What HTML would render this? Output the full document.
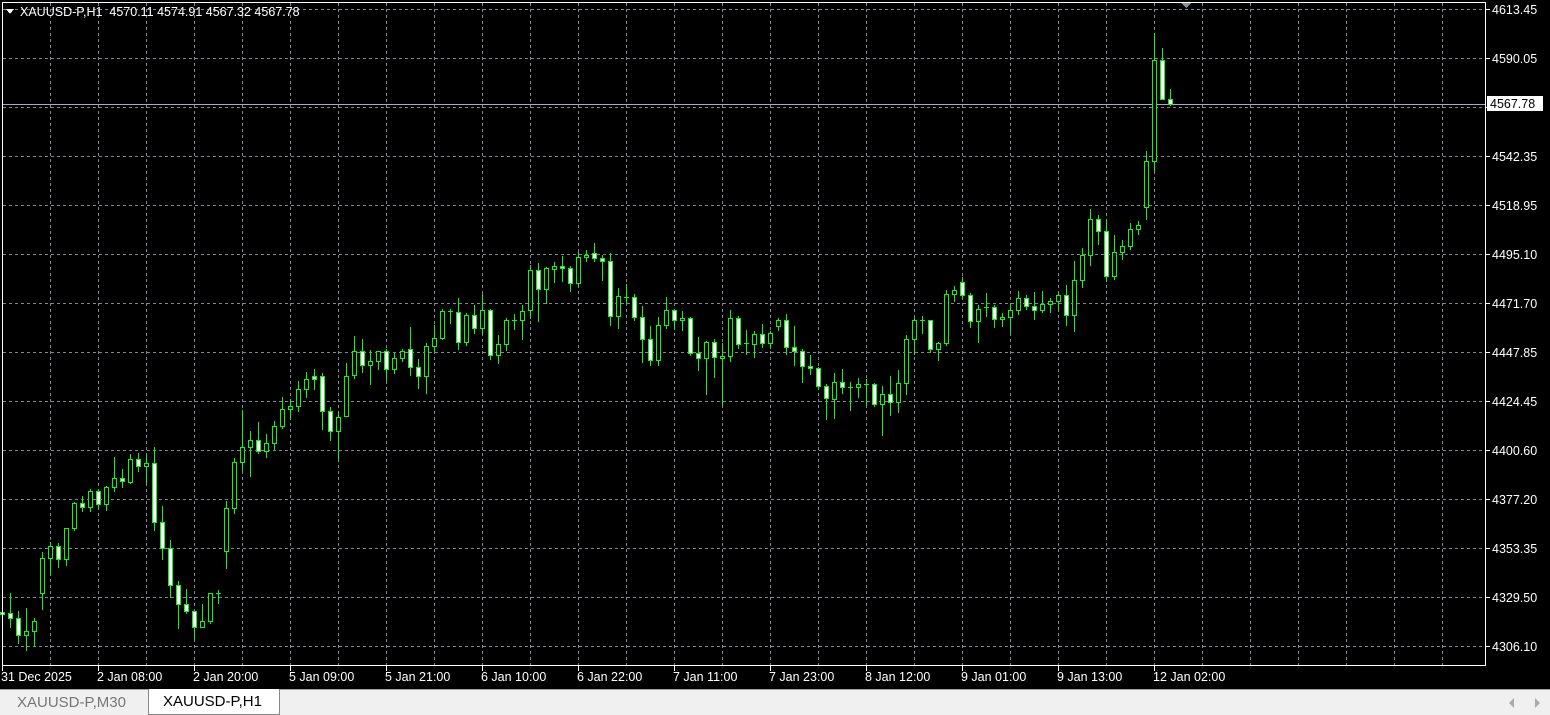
<!DOCTYPE html>
<html><head><meta charset="utf-8"><style>
html,body{margin:0;padding:0;width:1550px;height:715px;overflow:hidden;background:#000;font-family:"Liberation Sans",sans-serif}
svg{position:absolute;left:0;top:0}
#tabs{position:absolute;left:0;top:689px;width:1550px;height:26px;background:#f0f0f0;border-top:1px solid #a0a0a0;box-sizing:border-box}
.tab{position:absolute;top:0;height:25px;line-height:25px;font-size:15px;padding:0 14px}
</style></head><body>
<svg id="c" width="1550" height="689" xmlns="http://www.w3.org/2000/svg" shape-rendering="crispEdges"></svg>
<div id="tabs">
<div class="tab" style="left:3px;color:#777">XAUUSD-P,M30</div>
<div class="tab" style="left:148px;width:102px;background:#fff;border:1px solid #888;border-top:none;color:#000;top:-1px;height:25px">XAUUSD-P,H1</div>
<div style="position:absolute;left:1509px;top:8px;width:0;height:0;border-top:5px solid transparent;border-bottom:5px solid transparent;border-right:5px solid #aaa"></div>
<div style="position:absolute;left:1535px;top:8px;width:0;height:0;border-top:5px solid transparent;border-bottom:5px solid transparent;border-left:5px solid #aaa"></div>
</div>
<script>
var D=[[612,614,598,622,1],[613,618,593,627,1],[618,635,611,643,1],[631,635,608,650,0],[621,631,618,645,0],[558,593,552,609,0],[546,558,542,574,0],[546,559,543,567,1],[528,559,528,565,0],[503,528,502,530,0],[503,507,496,511,1],[491,507,489,511,0],[491,504,489,508,1],[487,504,486,510,0],[478,487,457,491,0],[478,481,469,487,1],[459,482,454,483,0],[459,466,453,471,1],[463,466,455,483,0],[463,522,447,530,1],[522,548,506,559,1],[548,585,540,597,1],[585,604,581,628,1],[604,611,589,613,1],[611,627,611,639,1],[621,627,604,627,0],[593,621,593,623,0],[593,593,590,603,0],[508,551,501,568,0],[462,508,458,513,0],[447,462,410,470,0],[440,447,431,476,0],[440,451,422,453,1],[443,451,434,457,0],[426,443,421,449,0],[409,426,397,428,0],[406,409,399,418,0],[389,406,381,411,0],[379,389,372,397,0],[376,379,369,389,1],[376,411,373,429,1],[411,431,407,440,1],[417,431,412,460,0],[376,416,363,416,0],[351,375,336,378,0],[351,365,339,372,1],[361,365,350,384,0],[351,361,351,369,0],[351,369,349,380,1],[358,369,353,373,0],[351,358,349,361,0],[349,367,327,375,1],[367,376,359,388,1],[346,376,343,393,0],[338,346,325,351,0],[311,338,309,339,0],[311,311,309,323,0],[312,342,298,349,1],[315,342,313,345,0],[315,328,305,333,1],[310,328,294,333,0],[310,355,309,359,1],[344,355,335,363,0],[320,344,318,350,0],[320,320,314,329,0],[311,320,305,339,0],[270,310,265,318,0],[270,289,263,321,1],[268,289,267,303,0],[266,269,262,282,0],[266,268,256,281,1],[268,283,266,291,1],[257,283,252,286,0],[255,257,250,261,0],[253,258,243,261,1],[258,261,255,280,1],[261,316,253,325,1],[296,316,288,328,0],[297,297,284,303,0],[297,317,294,320,1],[317,339,306,362,1],[339,360,326,365,1],[325,360,317,365,0],[310,325,297,328,0],[310,320,309,328,1],[318,320,311,330,0],[318,353,317,355,1],[353,358,337,370,1],[342,358,341,394,0],[342,357,339,377,1],[356,358,343,404,0],[318,356,310,361,0],[318,344,316,348,1],[343,343,330,354,0],[334,344,331,357,0],[334,343,324,347,1],[333,343,331,348,0],[320,326,318,330,0],[320,347,314,354,1],[347,351,326,365,1],[351,366,349,382,1],[366,368,355,374,1],[368,386,367,389,1],[386,398,384,419,1],[382,399,373,418,0],[382,387,369,393,1],[387,387,382,410,0],[384,387,378,397,0],[384,384,379,405,0],[384,404,383,406,1],[394,404,386,435,0],[394,402,376,415,1],[383,402,370,412,0],[339,383,335,394,0],[320,339,318,354,0],[320,320,316,333,0],[320,349,320,352,1],[343,349,342,360,0],[294,343,290,345,0],[290,294,286,301,0],[282,295,277,299,1],[295,321,293,327,1],[309,321,305,342,0],[307,307,293,316,0],[307,319,305,327,1],[317,319,313,326,0],[310,317,303,332,0],[298,310,291,314,0],[298,306,295,309,1],[306,310,292,319,1],[304,310,291,312,0],[301,304,298,312,0],[295,301,293,310,0],[295,315,285,325,1],[280,315,261,331,0],[255,280,248,287,0],[219,255,209,265,0],[219,231,215,244,1],[231,276,219,281,1],[252,276,235,279,0],[246,252,240,259,0],[229,246,223,249,0],[225,229,221,234,0],[161,207,151,219,0],[60,161,33,171,0],[60,99,48,99,1],[99,104,89,105,1]];
var s='';var G='#7d8796';
for(var x=50;x<1485;x+=48)s+='<line x1="'+(x+.5)+'" y1="3" x2="'+(x+.5)+'" y2="665" stroke="'+G+'" stroke-dasharray="3,3"/>';
var PP=['4613.45','4590.05',null,'4542.35','4518.95','4495.10','4471.70','4447.85','4424.45','4400.60','4377.20','4353.35','4329.50','4306.10'];
for(var j=0;j<14;j++){var y=9+49*j;s+='<line x1="3" y1="'+(y+.5)+'" x2="1485" y2="'+(y+.5)+'" stroke="'+G+'" stroke-dasharray="3,3"/>';
s+='<line x1="1486" y1="'+(y+.5)+'" x2="1490" y2="'+(y+.5)+'" stroke="#fff"/>';
if(PP[j])s+='<text x="1492" y="'+(y+5)+'" fill="#fff" font-size="12.5">'+PP[j]+'</text>';}
s+='<line x1="3" y1="104.5" x2="1485" y2="104.5" stroke="#a4adbb"/>';
for(var k=0;k<D.length;k++){var d=D[k],cx=2+8*k;
s+='<line x1="'+(cx+.5)+'" y1="'+d[2]+'" x2="'+(cx+.5)+'" y2="'+(d[3]+1)+'" stroke="#00ff00"/>';
if(d[0]==d[1])s+='<line x1="'+(cx-2)+'" y1="'+(d[0]+.5)+'" x2="'+(cx+3)+'" y2="'+(d[0]+.5)+'" stroke="#00ff00"/>';
else s+='<rect x="'+(cx-2+.5)+'" y="'+(d[0]+.5)+'" width="4" height="'+(d[1]-d[0])+'" fill="'+(d[4]?'#fff':'#000')+'" stroke="#00ff00"/>';}
s+='<rect x="2.5" y="2.5" width="1483" height="663" fill="none" stroke="#fff"/>';
s+='<rect x="1487" y="96" width="56" height="15" fill="#fff"/><text x="1490" y="108" fill="#000" font-size="12.5">4567.78</text>';
var T=['31 Dec 2025','2 Jan 08:00','2 Jan 20:00','5 Jan 09:00','5 Jan 21:00','6 Jan 10:00','6 Jan 22:00','7 Jan 11:00','7 Jan 23:00','8 Jan 12:00','9 Jan 01:00','9 Jan 13:00','12 Jan 02:00'];
for(var i=0;i<T.length;i++){var x=2+96*i;s+='<line x1="'+(x+.5)+'" y1="666" x2="'+(x+.5)+'" y2="671" stroke="#fff"/><text x="'+(i?x-1:1)+'" y="681" fill="#fff" font-size="12.5">'+T[i]+'</text>';}
s+='<polygon points="1181,3 1191,3 1186,8" fill="#8a919c"/>';
s+='<polygon points="6,9 14,9 10,14" fill="#fff"/><text x="20" y="16" fill="#fff" font-size="12.5" xml:space="preserve">XAUUSD-P,H1  4570.11 4574.91 4567.32 4567.78</text>';
document.getElementById('c').innerHTML=s;
</script>
</body></html>
